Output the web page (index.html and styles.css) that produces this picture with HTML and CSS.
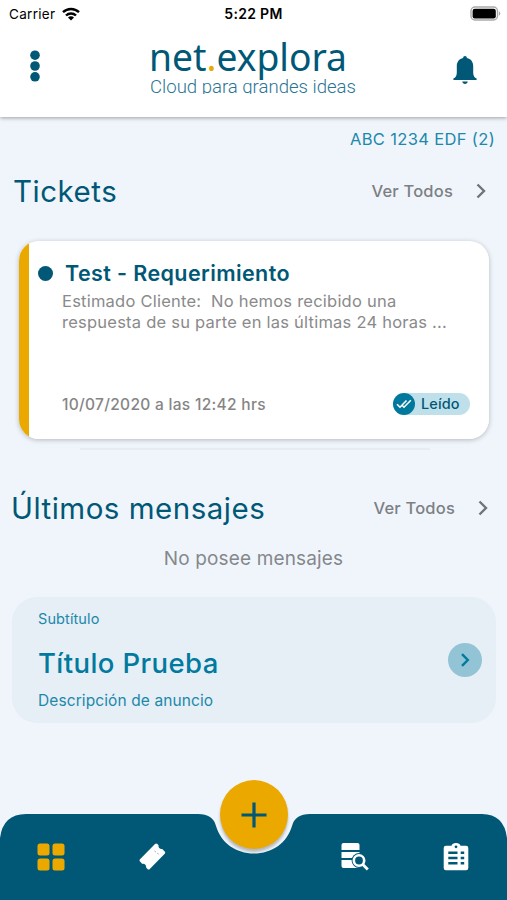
FILE: index.html
```html
<!DOCTYPE html>
<html lang="es">
<head>
  <meta charset="UTF-8" />
  <meta name="viewport" content="width=device-width, initial-scale=1" />
  <title>net.explora</title>
  <link rel="stylesheet" href="styles.css">
</head>

<body>
  <header class="header">
    <div class="status-bar">
      <div class="carrier">
        <span>Carrier</span>
        <svg class="wifi" viewBox="0 0 18 14" width="18" height="14">
          <g fill="none" stroke="#000" stroke-width="2.4">
            <path d="M1 5.2a11.6 11.6 0 0 1 16 0" />
            <path d="M4 8.5a7.2 7.2 0 0 1 10 0" />
          </g>
          <path d="M9 13.6l-3-3.2a4.2 4.2 0 0 1 6 0z" />
        </svg>
      </div>
      <div class="clock">5:22 PM</div>
      <div class="battery">
        <svg viewBox="0 0 31 15" width="31" height="15">
          <rect x="1" y="1" width="26.5" height="13" rx="4" fill="#fff" stroke="#a9a9a9" stroke-width="1.4" />
          <rect x="2.6" y="2.7" width="23.2" height="9.7" rx="2.2" />
          <path d="M28.9 5.2a2.6 2.6 0 0 1 0 4.6z" fill="#a9a9a9" />
        </svg>
      </div>
    </div>

    <div class="top-bar">
      <button class="icon-btn" aria-label="Menu">
        <svg viewBox="0 0 10 32" width="10" height="32" fill="#005876">
          <circle cx="5" cy="5.2" r="4.8" />
          <circle cx="5" cy="16" r="4.8" />
          <circle cx="5" cy="26.8" r="4.8" />
        </svg>
      </button>
      <svg class="logo" viewBox="0 0 210 56" width="210" height="56">
        <text class="logo-name" x="0" y="33" textLength="198" lengthAdjust="spacingAndGlyphs">net<tspan class="logo-dot">.</tspan>explora</text>
        <text class="logo-tagline" x="1" y="55" textLength="206" lengthAdjust="spacingAndGlyphs">Cloud para grandes ideas</text>
      </svg>
      <button class="icon-btn" aria-label="Notificaciones">
        <svg viewBox="0 0 24 28" width="24" height="28" fill="#005876">
          <path d="M12 0c1.1 0 1.9.8 1.9 1.9 4 .9 6.3 4 6.3 8v6.5c0 3.3 1.3 5 3.4 6.2v1.4H.4v-1.4c2.1-1.2 3.4-2.9 3.4-6.2V9.900c0-4 2.300-7.100 6.300-8C10.100.8 10.900 0 12 0z" />
          <path d="M9.200 25.400h5.600c-.3 1.600-1.400 2.500-2.800 2.500s-2.500-.9-2.800-2.500z" />
        </svg>
      </button>
    </div>
  </header>

  <main>
    <div class="account">ABC 1234 EDF (2)</div>

    <!-- Tickets -->
    <section>
      <div class="section-head">
        <h2>Tickets</h2>
        <a class="see-all" href="#">
          <span>Ver Todos</span>
          <svg viewBox="0 0 10 16" width="10" height="16"><path d="M1.500 1.500L8 8l-6.500 6.500" /></svg>
        </a>
      </div>

      <article class="ticket">
        <div class="ticket-title">
          <span class="unread"></span>
          <h3>Test - Requerimiento</h3>
        </div>
        <p class="ticket-text">Estimado Cliente:&nbsp; No hemos recibido una<br>respuesta de su parte en las últimas 24 horas ...</p>
        <div class="ticket-foot">
          <span class="date">10/07/2020 a las 12:42 hrs</span>
          <span class="badge">
            <span class="badge-icon">
              <svg viewBox="0 0 16 10" width="16" height="10">
                <path d="M1 5.200l3 3L10.500 1.500M6 6.200l2 2L14.800 1.200" />
              </svg>
            </span>
            <span>Leído</span>
          </span>
        </div>
      </article>
      <div class="stack-edge"></div>
    </section>

    <!-- Mensajes -->
    <section>
      <div class="section-head messages-head">
        <h2>Últimos mensajes</h2>
        <a class="see-all" href="#">
          <span>Ver Todos</span>
          <svg viewBox="0 0 10 16" width="10" height="16"><path d="M1.500 1.500L8 8l-6.500 6.500" /></svg>
        </a>
      </div>
      <p class="empty">No posee mensajes</p>
    </section>

    <!-- Anuncio -->
    <article class="notice">
      <div>
        <p class="notice-sub">Subtítulo</p>
        <h3>Título Prueba</h3>
        <p class="notice-desc">Descripción de anuncio</p>
      </div>
      <a class="notice-go" href="#" aria-label="Ver anuncio">
        <svg viewBox="0 0 10 16" width="10" height="16"><path d="M2 2.200L7.800 8 2 13.800" /></svg>
      </a>
    </article>
  </main>

  <nav class="tab-bar">
    <svg class="tab-shape" viewBox="0 0 507 86" width="507" height="86">
      <path d="M0 24Q3 0 26 0H198Q213 0 216 12C221 29 236 39.500 254 39.500S287 29 292 12Q295 0 310 0H482Q504 0 507 24V86H0z" fill="#005876" />
    </svg>
    <button class="fab" aria-label="Nuevo">
      <svg viewBox="0 0 26 26" width="26" height="26"><path d="M13 .5v25M.5 13h25" /></svg>
    </button>
    <div class="tabs">
      <a href="#" aria-label="Inicio">
        <svg viewBox="0 0 28 28" width="28" height="28" fill="#eba900">
          <rect x="0.500" y="0.500" width="12" height="12" rx="2.500" />
          <rect x="15.500" y="0.500" width="12" height="12" rx="2.500" />
          <rect x="0.500" y="15.500" width="12" height="12" rx="2.500" />
          <rect x="15.500" y="15.500" width="12" height="12" rx="2.500" />
        </svg>
      </a>
      <a href="#" aria-label="Tickets">
        <svg viewBox="0 0 28 28" width="28" height="28">
          <path d="M17 1q1.200-1.200 2.300 0l1.300 1.300c-.5 2.300 1.200 4.200 3.600 3.700l2.500 2.500q1 1.200 0 2.300L11.800 26q-1.200 1.200-2.300 0l-1.400-1.400c.4-2.300-1.300-4.200-3.700-3.700l-2.400-2.500q-1-1.100 0-2.200z" fill="#fff" />
          <path d="M16.500 8l5.500 4.200" stroke="#9fb0b8" stroke-dasharray="1.800 1.600" fill="none" />
        </svg>
      </a>
      <span class="tab-gap"></span>
      <a href="#" aria-label="Historial">
        <svg viewBox="0 0 28 28" width="28" height="28">
          <g fill="#fff">
            <path d="M2.500 0h14q2 0 2 2v5H.5V2q0-2 2-2z" />
            <path d="M.5 9h18v6H.5z" />
            <path d="M.5 17h18v8h-16q-2 0-2-2z" />
          </g>
          <circle cx="18" cy="17.500" r="7.400" fill="#005876" />
          <circle cx="18" cy="17.500" r="5.200" fill="none" stroke="#fff" stroke-width="2.600" />
          <path d="M21.800 21.500l5 5" stroke="#fff" stroke-width="2.800" />
        </svg>
      </a>
      <a href="#" aria-label="Formularios">
        <svg viewBox="0 0 28 28" width="28" height="28">
          <path d="M4 2.700h5.500C10 1 11.500 0 14 0s4 1 4.500 2.700H24q2.300 0 2.300 2.300v20q0 2.300-2.300 2.300H4q-2.300 0-2.300-2.300V5q0-2.300 2.300-2.300z" fill="#fff" />
          <circle cx="14" cy="3.800" r="1.400" fill="#005876" />
          <path d="M6.300 9.700h9.200M6.300 15h9.200M6.300 20.300h9.200M18.700 9.700h3.500M18.700 15h3.500M18.700 20.300h3.500" stroke="#005876" stroke-width="2.500" />
        </svg>
      </a>
    </div>
  </nav>
</body>
</html>
```
FILE: styles.css
```css
* {
  margin: 0;
  padding: 0;
  box-sizing: border-box;
}

body {
  font-family: Inter, sans-serif;
  background-color: #f0f5fc;
  color: #005876;
  height: 900px;
  display: flex;
  flex-direction: column;
  overflow: hidden;
}

svg {
  display: block;
}

a {
  color: inherit;
  text-decoration: none;
}

button {
  border: none;
  background: none;
  cursor: pointer;
}

.header {
  height: 117px;
  background-color: #fff;
  box-shadow: 0 1px 4px rgba(0, 0, 0, 0.35);
}

/* Status bar */
.status-bar {
  height: 27px;
  padding: 0 5px 0 9px;
  display: grid;
  grid-template-columns: 1fr auto 1fr;
  align-items: center;
  color: #000;
  font-size: 13.5px;
}

.carrier {
  display: flex;
  align-items: center;
  gap: 7px;
  letter-spacing: 0.3px;
}

.clock {
  font-weight: 600;
  font-size: 14px;
  letter-spacing: 0.3px;
  padding-right: 4px;
}

.battery {
  justify-self: end;
  margin-right: 1px;
}

.top-bar {
  height: 90px;
  padding: 0 30px;
  display: flex;
  justify-content: space-between;
}

.top-bar .icon-btn:first-child {
  margin-top: 23px;
  height: 32px;
}

.top-bar .icon-btn:last-child {
  margin-top: 29px;
  height: 28px;
}

.logo {
  margin: 11px 0 0 15px;
}

.logo-name {
  font-family: "Noto Sans", sans-serif;
  font-size: 39px;
  fill: #005876;
}

.logo-dot {
  fill: #eba900;
}

.logo-tagline {
  font-family: Roboto, sans-serif;
  font-weight: 300;
  font-size: 19px;
  fill: #2a7594;
}

/* Content */
main {
  flex: 1;
}

.account {
  padding: 11px 12px 0;
  text-align: right;
  font-size: 16.5px;
  line-height: 22px;
  letter-spacing: 0.35px;
  color: #1c88aa;
}

.section-head {
  height: 40px;
  margin-top: 21px;
  padding: 0 21px 0 13px;
  display: flex;
  justify-content: space-between;
  align-items: center;
}

.section-head h2 {
  font-size: 29.5px;
  font-weight: 400;
  letter-spacing: 0.5px;
}

.see-all {
  display: flex;
  align-items: center;
  gap: 23px;
  font-size: 16.5px;
  font-weight: 500;
  letter-spacing: 0.2px;
  color: #7c8084;
}

.see-all path {
  fill: none;
  stroke: #707478;
  stroke-width: 2.4;
}

.ticket {
  height: 198px;
  margin: 30px 18px 0 19px;
  padding: 19px 19px 0 16px;
  background: linear-gradient(to right, #eba900 10px, #fff 10px);
  border-radius: 20px;
  box-shadow: 0 1px 5px rgba(0, 0, 0, 0.25);
}

.ticket-title {
  display: flex;
  align-items: center;
  gap: 12px;
  padding-left: 3px;
}

.unread {
  width: 15px;
  height: 15px;
  border-radius: 50%;
  background-color: #005876;
}

.ticket-title h3 {
  font-size: 21.5px;
  line-height: 26px;
  font-weight: 600;
  letter-spacing: 0.4px;
}

.ticket-text {
  margin: 5px 0 0 27px;
  font-size: 16.5px;
  line-height: 21px;
  letter-spacing: 0.23px;
  color: #8a8a8a;
  white-space: nowrap;
}

.ticket-foot {
  margin: 60px 0 0 27px;
  display: flex;
  justify-content: space-between;
  align-items: center;
}

.date {
  font-size: 15.5px;
  font-weight: 500;
  letter-spacing: 0.3px;
  color: #858585;
}

.badge {
  width: 77px;
  height: 22px;
  display: flex;
  align-items: center;
  gap: 6px;
  border-radius: 11px;
  background-color: #bfe0ea;
  font-size: 14.5px;
  line-height: 20px;
  font-weight: 500;
  letter-spacing: 0.1px;
}

.badge-icon {
  width: 22px;
  height: 22px;
  display: flex;
  align-items: center;
  justify-content: center;
  border-radius: 50%;
  background-color: #00799c;
}

.badge-icon path {
  fill: none;
  stroke: #fff;
  stroke-width: 1.6;
}

/* Edge of the next card in the stack */
.stack-edge {
  width: 350px;
  height: 2px;
  margin: 9px 0 0 80px;
  background-color: #e7ecf2;
}

.messages-head {
  margin-top: 38px;
  padding: 0 19px 0 11px;
}

.empty {
  margin-top: 18px;
  text-align: center;
  font-size: 19px;
  line-height: 26px;
  letter-spacing: 0.15px;
  color: #85888b;
}

.notice {
  height: 126px;
  margin: 25px 11px 0 12px;
  padding: 0 14px 0 26px;
  display: flex;
  justify-content: space-between;
  align-items: center;
  border-radius: 25px;
  background-color: #e6eef6;
  color: #1c88aa;
}

.notice-sub {
  font-size: 14.5px;
  line-height: 18px;
  letter-spacing: 0.1px;
}

.notice h3 {
  margin: 18px 0 11px;
  font-size: 27.5px;
  line-height: 34px;
  font-weight: 500;
  letter-spacing: 0.4px;
  color: #007a9e;
}

.notice-desc {
  font-size: 15.5px;
  line-height: 20px;
  letter-spacing: 0.1px;
}

.notice-go {
  width: 34px;
  height: 34px;
  display: flex;
  align-items: center;
  justify-content: center;
  border-radius: 50%;
  background-color: #93c4d6;
}

.notice-go path {
  fill: none;
  stroke: #007a9e;
  stroke-width: 2.4;
}

/* Bottom tabs, with a notch for the floating button */
.tab-bar {
  height: 86px;
  position: relative;
}

.tab-shape {
  position: absolute;
  top: 0;
  left: 0;
}

.fab {
  position: absolute;
  top: -34px;
  left: 220px;
  width: 68px;
  height: 69px;
  display: flex;
  align-items: center;
  justify-content: center;
  border-radius: 50%;
  background-color: #eba900;
  box-shadow: 0 3px 3px 0 rgba(0, 0, 0, 0.25);
}

.fab path {
  stroke: #005876;
  stroke-width: 3.2;
}

.tabs {
  position: relative;
  height: 86px;
  display: grid;
  grid-template-columns: repeat(5, 1fr);
  align-items: center;
  justify-items: center;
}
```
